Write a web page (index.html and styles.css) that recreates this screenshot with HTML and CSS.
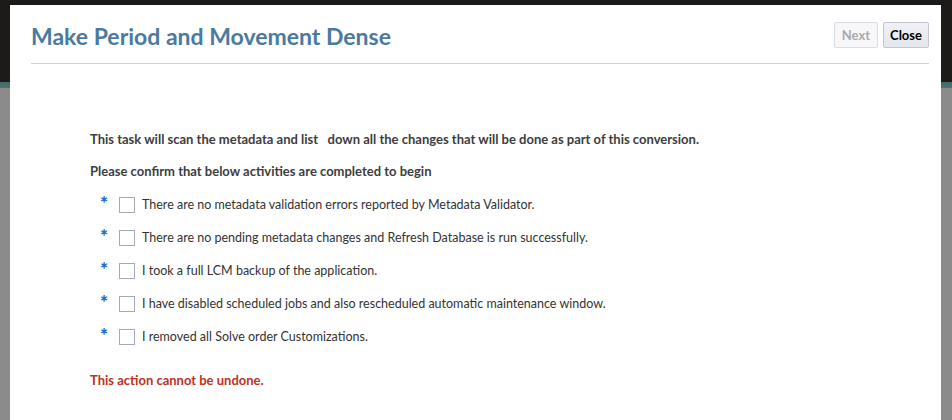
FILE: index.html
```html
<!DOCTYPE html>
<html>
<head>
<meta charset="utf-8">
<link rel="stylesheet" href="styles.css">
</head>
<body>
<div class="dialog">
  <div class="header">
    <h1 class="title">Make Period and Movement Dense</h1>
    <div class="actions">
      <button class="btn btn-disabled" disabled>Next</button>
      <button class="btn">Close</button>
    </div>
  </div>
  <div class="content">
    <p class="intro">This task will scan the metadata and list &nbsp; down all the changes that will be done as part of this conversion.</p>
    <p class="intro confirm">Please confirm that below activities are completed to begin</p>
    <ul class="checklist">
      <li class="item"><span class="req">*</span><span class="box"></span><span class="label">There are no metadata validation errors reported by Metadata Validator.</span></li>
      <li class="item"><span class="req">*</span><span class="box"></span><span class="label">There are no pending metadata changes and Refresh Database is run successfully.</span></li>
      <li class="item"><span class="req">*</span><span class="box"></span><span class="label">I took a full LCM backup of the application.</span></li>
      <li class="item"><span class="req">*</span><span class="box"></span><span class="label">I have disabled scheduled jobs and also rescheduled automatic maintenance window.</span></li>
      <li class="item"><span class="req">*</span><span class="box"></span><span class="label">I removed all Solve order Customizations.</span></li>
    </ul>
    <p class="warning">This action cannot be undone.</p>
  </div>
</div>
</body>
</html>
```

FILE: styles.css
```css
html, body {
  margin: 0;
  height: 100%;
}
body {
  font-family: Lato, "Open Sans", sans-serif;
  background: linear-gradient(to bottom, #1d1b19 0, #1d1b19 82px, #3f6a6a 82px, #55706c 88px, #8b8b8b 88px, #8b8b8b 100%);
  padding: 5px 11px 0 10px;
  box-sizing: border-box;
  overflow: hidden;
}
.dialog {
  background: #fff;
  height: 420px;
  display: flex;
  flex-direction: column;
}
.header {
  display: flex;
  align-items: center;
  justify-content: space-between;
  height: 59px;
  margin: 0 12px 0 21px;
  border-bottom: 1px solid #cbd3dc;
  box-sizing: border-box;
}
.title {
  margin: 0;
  font-size: 23px;
  font-weight: 700;
  color: #4a7aa0;
  line-height: 28px;
  padding-top: 3px;
}
.actions {
  display: flex;
  gap: 5px;
  padding-top: 1px;
}
.btn {
  font-family: Lato, "Open Sans", sans-serif;
  font-size: 13px;
  font-weight: 700;
  height: 26px;
  padding: 0 6px;
  border: 1px solid #c6c6d0;
  border-radius: 2px;
  background: linear-gradient(#f0f0f6, #e6e6ee);
  color: #000;
}
.btn-disabled {
  padding: 0 7px;
  background: #f7f7fa;
  border-color: #dcdce6;
  color: #a9a9a9;
}
.content {
  padding: 67px 0 0 80px;
}
.intro {
  margin: 0;
  font-size: 13px;
  font-weight: 700;
  color: #3d3d3d;
  line-height: 16px;
}
.confirm {
  margin-top: 16px;
}
.checklist {
  list-style: none;
  margin: 9px 0 0 0;
  padding: 0 0 0 10px;
}
.item {
  display: flex;
  align-items: center;
  height: 33px;
}
.req {
  color: #1b6fbd;
  font-weight: 900;
  font-size: 19px;
  width: 19px;
  line-height: 16px;
  position: relative;
  top: -2px;
}
.box {
  width: 14px;
  height: 14px;
  border: 1px solid #a9a9b3;
  background: #fff;
  margin-right: 7px;
  flex: none;
}
.label {
  font-size: 12.5px;
  color: #333;
  line-height: 16px;
}
.warning {
  margin: 19px 0 0 0;
  font-size: 13px;
  font-weight: 700;
  color: #c0301e;
  line-height: 16px;
}
```
